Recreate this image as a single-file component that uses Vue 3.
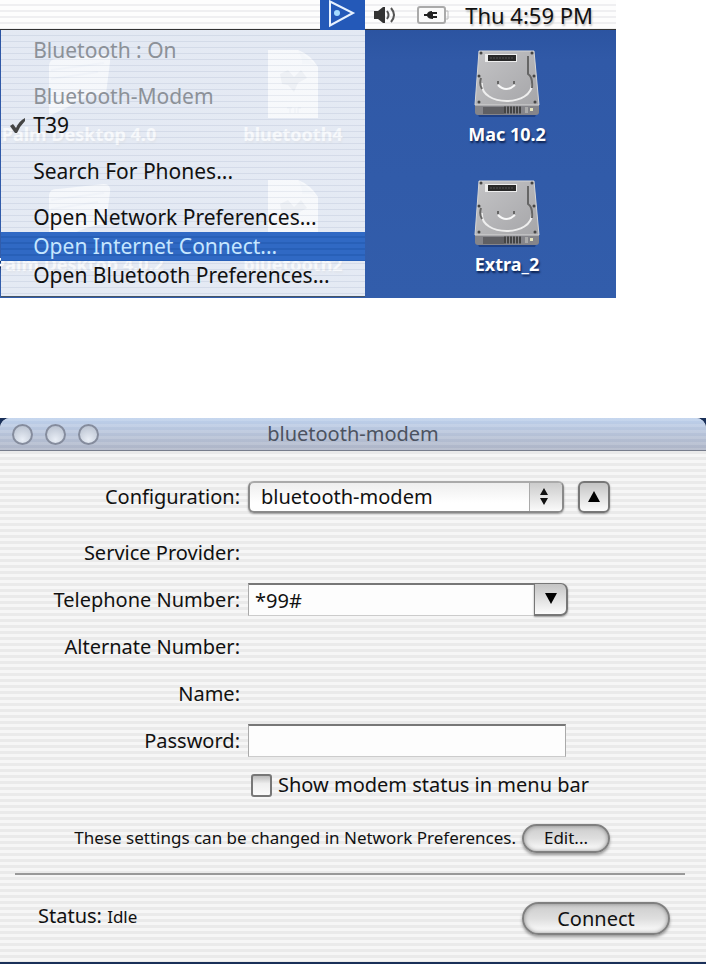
<template>
  <main class="page">
    <section class="desktop">
      <header class="menubar">
        <div class="status-item">
          <button class="bt-button" aria-label="Bluetooth" aria-haspopup="menu" aria-expanded="true">
            <svg width="45" height="30" viewBox="0 0 45 30">
              <path d="M10 1.5 L33 13 L10 25.5 Z" fill="none" stroke="#e8f2ff" stroke-width="2" />
              <circle cx="17" cy="13" r="3" fill="#a5dcff" />
            </svg>
          </button>
          <div class="menu" role="menu">
            <div v-for="(group, g) in menuGroups" :key="g" class="menu-group">
              <button
                v-for="item in group"
                :key="item.label"
                class="menu-item"
                :class="{ active: item.active }"
                :disabled="item.disabled"
                role="menuitem"
              >
                <svg v-if="item.checked" class="check" width="16" height="18" viewBox="0 0 16 18">
                  <path d="M0 9 L3 7 L6 11 Q9 4 15 1 L15 4 Q10 9 7 16 L5 16 Z" fill="#444" />
                </svg>
                {{ item.label }}
              </button>
            </div>
          </div>
        </div>
        <svg class="speaker" width="24" height="20" viewBox="0 0 24 20">
          <path d="M1 6 H5 L10 2 H12 V18 H10 L5 14 H1 Z" fill="#333" />
          <path d="M14 6 Q17 10 14 14 M18 3 Q24 10 18 17" fill="none" stroke="#555" stroke-width="2" />
        </svg>
        <svg class="battery" width="32" height="18" viewBox="0 0 32 18">
          <rect x="1" y="1" width="27" height="16" rx="2" fill="#fafafa" stroke="#aaa" stroke-width="2" />
          <path d="M29 5 H31 V13 H29" fill="none" stroke="#bbb" stroke-width="1" />
          <path d="M7 8 H10 Q11 5 15 5 V6 H20 V8 H16 V10 H20 V12 H16 V13 Q11 13 10 10 H7 Z" fill="#222" />
        </svg>
        <time class="clock">Thu 4:59 PM</time>
      </header>

      <div class="icons">
        <figure v-for="icon in icons" :key="icon.label" class="icon">
          <svg v-if="icon.kind === 'drive'" width="66" height="68" viewBox="0 0 66 68">
            <defs>
              <linearGradient id="metal" x1="0" y1="0" x2="1" y2="1">
                <stop offset="0" stop-color="#c4c4c6" />
                <stop offset="1" stop-color="#a5a5a8" />
              </linearGradient>
            </defs>
            <path d="M1 56 L5 67 H61 L65 56 Z" fill="#14316f" opacity=".6" />
            <path d="M1 54 H65 V62 Q65 65 62 65 H4 Q1 65 1 62 Z" fill="#85858a" />
            <path d="M5 1 H60 L65 55 H1 Z" fill="url(#metal)" stroke="#d6d6d6" />
            <path d="M8 33 C6 57 59 57 58 33" fill="none" stroke="#eee" stroke-width="2" />
            <path d="M7 28 Q5 34 8 39 M54 6 V24 Q59 27 58 38" fill="none" stroke="#666" stroke-width="2" />
            <path d="M11 4 H43 V12 H11 Z" fill="#eee" />
            <rect x="14" y="5" width="28" height="6" fill="#292929" />
            <path d="M16 8 H40" stroke="#555" stroke-dasharray="2 1" />
            <path d="M24 35 Q32 43 41 35" fill="none" stroke="#f8f8f8" stroke-width="2" />
            <path d="M24 31 V34 M40 31 V34" stroke="#666" stroke-width="2" />
            <g fill="#454545">
              <circle cx="7" cy="3" r="1.5" /><circle cx="58" cy="3" r="1.5" />
              <circle cx="5" cy="26" r="1.5" /><circle cx="60" cy="26" r="1.5" />
              <circle cx="5" cy="52" r="1.5" /><circle cx="61" cy="52" r="1.5" />
            </g>
            <rect x="9" y="57" width="21" height="7" fill="#5f5f63" />
            <path d="M30 60 H47" stroke="#444" stroke-width="7" stroke-dasharray="2 1" />
            <rect x="51" y="57" width="3" height="6" fill="#aaa" />
            <rect x="56" y="58" width="3" height="3" fill="#e4e4c0" />
          </svg>
          <svg v-else-if="icon.kind === 'tif'" width="50" height="68" viewBox="0 0 50 68">
            <path d="M0 0 H30 Q43 5 50 17 V68 H0 Z" fill="#fff" />
            <path d="M30 0 Q35 10 34 14 Q43 13 50 17" fill="#dce4f0" />
            <path d="M12 24 L20 20 L26 27 L33 20 L39 28 L30 33 L26 42 L20 35 L14 34 Z" fill="#9aa5b8" />
            <path d="M19 58 H24 M22 58 V63 M27 58 V63 M30 63 V58 H33" fill="none" stroke="#8fa0bf" />
          </svg>
          <svg v-else width="66" height="68" viewBox="0 0 66 68">
            <path d="M3 15 Q4 8 12 9 L58 4 Q65 4 64 12 L60 44 Q38 46 24 56 L3 66 Z" fill="#eef2fa" />
            <path d="M5 20 L58 13 M5 29 L52 22" stroke="#bccae5" stroke-width="2" />
          </svg>
          <figcaption>{{ icon.label }}</figcaption>
        </figure>
      </div>
    </section>

    <section class="window-frame">
      <div class="window">
        <header class="titlebar">
          <div class="lights">
            <button v-for="name in ['Close', 'Minimize', 'Zoom']" :key="name" class="light" :aria-label="name"></button>
          </div>
          <h1>bluetooth-modem</h1>
        </header>

        <form class="body" @submit.prevent>
          <div class="row config-row">
            <label for="config">Configuration:</label>
            <div class="field config">
              <div class="popup">
                <select id="config" v-model="config">
                  <option>bluetooth-modem</option>
                </select>
                <svg class="popup-arrows" width="32" height="28" viewBox="0 0 32 28">
                  <path d="M14 5 L18 12 H10 Z M14 22 L18 15 H10 Z" fill="#111" />
                </svg>
              </div>
              <button type="button" class="square" aria-label="Hide details">
                <svg width="12" height="12" viewBox="0 0 12 12"><path d="M6 0 L12 11 H0 Z" fill="#000" /></svg>
              </button>
            </div>
          </div>
          <div class="row">
            <span class="label">Service Provider:</span>
          </div>
          <div class="row">
            <label for="phone">Telephone Number:</label>
            <div class="field combo">
              <input id="phone" v-model="phone" type="text" />
              <button type="button" class="drop" aria-label="Show numbers">
                <svg width="12" height="12" viewBox="0 0 12 12"><path d="M0 0 H12 L6 11 Z" fill="#000" /></svg>
              </button>
            </div>
          </div>
          <div class="row">
            <span class="label">Alternate Number:</span>
          </div>
          <div class="row">
            <span class="label">Name:</span>
          </div>
          <div class="row">
            <label for="password">Password:</label>
            <div class="field">
              <input id="password" v-model="password" type="password" />
            </div>
          </div>
          <div class="check-row">
            <input id="show-status" v-model="showStatus" type="checkbox" />
            <label for="show-status">Show modem status in menu bar</label>
          </div>
          <div class="note">
            <span>These settings can be changed in Network Preferences.</span>
            <button type="button" class="pill small">Edit...</button>
          </div>
          <footer class="footer">
            <p>Status: <span class="state">Idle</span></p>
            <button class="pill">Connect</button>
          </footer>
        </form>
      </div>
    </section>
  </main>
</template>

<script setup>
import { ref } from 'vue'

const config = ref('bluetooth-modem')
const phone = ref('*99#')
const password = ref('')
const showStatus = ref(false)

const menuGroups = [
  [{ label: 'Bluetooth : On', disabled: true }],
  [
    { label: 'Bluetooth-Modem', disabled: true },
    { label: 'T39', checked: true },
  ],
  [{ label: 'Search For Phones...' }],
  [
    { label: 'Open Network Preferences...' },
    { label: 'Open Internet Connect...', active: true },
    { label: 'Open Bluetooth Preferences...' },
  ],
]

const icons = [
  { kind: 'folder', label: 'Palm Desktop 4.0' },
  { kind: 'tif', label: 'bluetooth4' },
  { kind: 'drive', label: 'Mac 10.2' },
  { kind: 'folder', label: 'Palm Desktop 4.0.2' },
  { kind: 'tif', label: 'bluetooth2' },
  { kind: 'drive', label: 'Extra_2' },
]
</script>

<style>
body { margin: 0; background: #fff; }
</style>

<style scoped>
.page { font-family: "Noto Sans", "Open Sans", sans-serif; font-size: 20px; line-height: 28px; color: #111; }
button, input, select { font: inherit; color: inherit; margin: 0; padding: 0; box-sizing: border-box; }
svg { display: block; }

.desktop { margin-right: 90px; height: 298px; overflow: hidden; background: linear-gradient(#274f9b, #3059a7 20%, #325dab); }
.menubar {
  position: relative; z-index: 1; display: flex; justify-content: flex-end; align-items: center;
  height: 29px; padding-right: 23px; border-bottom: 1px solid #333;
  background: repeating-linear-gradient(#fdfdfd 0 4px, #efeff1 4px 6px);
}
.status-item { position: relative; align-self: stretch; }
.bt-button { display: block; width: 45px; height: 30px; border: 0; background: #2459b8; }
.menu {
  position: absolute; top: 30px; right: 0; width: 364px; box-sizing: border-box; padding: 6px 0;
  background: repeating-linear-gradient(rgba(246, 248, 251, .91) 0 5px, rgba(228, 232, 239, .91) 5px 6px);
  border-bottom: 1px solid #456;
}
.menu-group + .menu-group { margin-top: 17px; }
.menu-item { position: relative; display: block; width: 100%; height: 29px; padding: 0 0 0 32px; border: 0; background: none; text-align: left; font-size: 21px; line-height: 29px; white-space: nowrap; }
.menu-item:disabled { color: #8c9198; }
.menu-item.active { color: #c5e6ff; background: repeating-linear-gradient(#3069c4 0 4px, #2860b8 4px 6px); }
.check { position: absolute; left: 9px; top: 6px; }
.speaker { margin-left: 8px; }
.battery { margin-left: 20px; }
.clock { margin-left: 16px; font-size: 22px; text-shadow: 1px 2px 2px #bbb; }

.icons { display: grid; grid-template-columns: repeat(3, 214px); justify-content: end; padding: 20px 2px 0 0; }
.icon { display: flex; flex-direction: column; align-items: center; height: 130px; margin: 0; }
.icon figcaption { margin-top: 2px; color: #fff; font-size: 18px; font-weight: 700; white-space: nowrap; text-shadow: 1px 2px 2px #0a2050; }

.window-frame { margin-top: 120px; padding-bottom: 2px; background: #1a3059; }
.window { border-radius: 10px 10px 0 0; overflow: hidden; background: repeating-linear-gradient(#f6f6f6 0 3px, #eaeaea 3px 6px); }
.titlebar {
  display: grid; grid-template-columns: 1fr auto 1fr; align-items: center; height: 32px; padding: 0 12px; border-bottom: 1px solid #777d8c;
  background: repeating-linear-gradient(rgba(255, 255, 255, .14) 0 3px, transparent 3px 6px), linear-gradient(#bdd0ec, #b4bfd4 60%, #aeb5c7);
}
.titlebar h1 { margin: 0; font-size: 20px; font-weight: 400; color: #4c5361; }
.lights { display: flex; gap: 12px; }
.light { width: 21px; height: 21px; border: 2px solid #858c9d; border-radius: 50%; background: radial-gradient(circle at 50% 80%, #e9eef6, #b4bdcc); }

.body { padding: 22px 0 0; }
.row { display: grid; grid-template-columns: 240px 1fr; column-gap: 8px; align-items: center; height: 47px; }
.config-row { margin-bottom: 9px; }
.row label, .label { text-align: right; white-space: nowrap; }
.field { display: flex; align-items: center; }
.field input {
  width: 318px; height: 33px; padding: 0 6px; outline: 0; background: #fdfdfd;
  border: 1px solid #aaa; border-top: 2px solid #777; border-bottom-color: #ccc; border-radius: 0;
}
.config { gap: 14px; }
.popup { position: relative; }
.popup select {
  display: block; appearance: none; width: 316px; height: 32px; padding: 0 36px 0 11px; outline: 0;
  border: 2px solid #8a8a8a; border-top-color: #aaa; border-radius: 6px; background: linear-gradient(#eee, #fff 70%); box-shadow: 0 1px 2px #999;
}
.popup-arrows { position: absolute; top: 2px; right: 2px; border-left: 1px solid #aaa; border-radius: 0 4px 4px 0; background: linear-gradient(#ccc, #fafafa); pointer-events: none; }
.square, .drop { display: flex; align-items: center; justify-content: center; border: 2px solid #777; background: linear-gradient(#c4c4c4, #fcfcfc); box-shadow: 0 1px 2px #999; }
.square { width: 32px; height: 32px; border-radius: 6px; }
.combo input { width: 286px; border-right: 0; }
.drop { width: 34px; height: 33px; border-width: 1px 2px 2px 1px; border-radius: 0 7px 7px 0; }

.check-row { display: flex; align-items: center; gap: 6px; height: 42px; padding-left: 251px; }
.check-row input { appearance: none; width: 21px; height: 23px; border: 2px solid #777; border-radius: 3px; background: linear-gradient(#bbb, #eee 40%, #fafafa); }
.note { display: flex; align-items: center; justify-content: flex-end; gap: 6px; height: 64px; padding-right: 96px; font-size: 17px; white-space: nowrap; }
.pill {
  width: 148px; height: 33px; border: 2px solid #808080; border-radius: 17px; line-height: 27px;
  background: linear-gradient(#ccc, #dedede 50%, #fff); box-shadow: 0 2px 3px #999, inset 0 0 4px #888;
}
.pill.small { width: 88px; height: 29px; font-size: 17px; line-height: 24px; }
.footer { display: flex; align-items: center; justify-content: space-between; height: 89px; margin: 3px 21px 0 15px; padding: 0 15px 0 23px; box-sizing: border-box; border-top: 2px solid #999; }
.footer p { margin: 0; padding-bottom: 4px; }
.state { font-size: 17px; }
</style>
